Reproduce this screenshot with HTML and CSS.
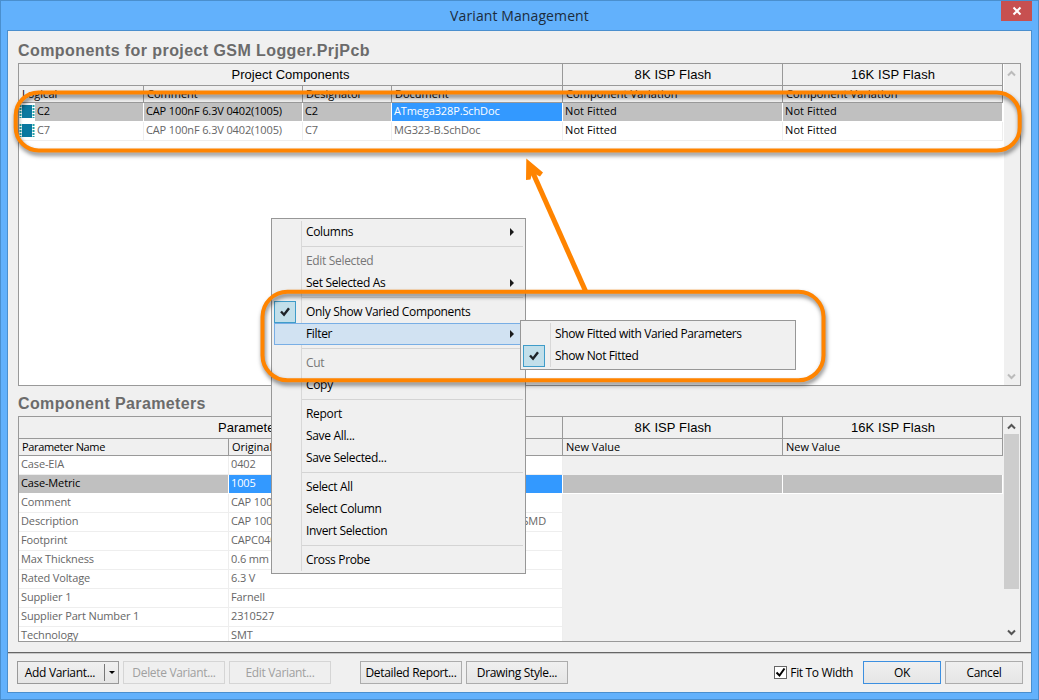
FILE: index.html
```
<!DOCTYPE html>
<html lang="en">
<head>
    <meta charset="UTF-8">
    <title>Variant Management</title>
    <link rel="stylesheet" href="styles.css">
</head>
<body>
    <div class="window">
        <header class="titlebar">
            <span>Variant Management</span>
            <button class="close" type="button" aria-label="Close">
                <svg width="10" height="10" viewBox="0 0 10 10"><path d="M1.5 1.5l7 7M8.5 1.5l-7 7" stroke="#fff" stroke-width="2"/></svg>
            </button>
        </header>
        <main class="content">
            <h2>Components for project GSM Logger.PrjPcb</h2>
            <section class="grid components">
                <div class="sheet">
                    <div class="bands"><span>Project Components</span><span>8K ISP Flash</span><span>16K ISP Flash</span></div>
                    <div class="row head"><span>Logical</span><span>Comment</span><span>Designator</span><span>Document</span><span>Component Variation</span><span>Component Variation</span></div>
                    <div class="row picked">
                        <span class="part"><svg width="16" height="18" viewBox="0 0 16 18"><path d="M1.5 2v13M14.5 2v13" stroke="#23a3a8" stroke-width="2" stroke-dasharray="2 1"/><path d="M3 2h10v13H3z" fill="#0a78a0"/></svg>C2</span>
                        <span>CAP 100nF 6.3V 0402(1005)</span><span>C2</span><span class="active">ATmega328P.SchDoc</span><span>Not Fitted</span><span>Not Fitted</span>
                    </div>
                    <div class="row">
                        <span class="part"><svg width="16" height="18" viewBox="0 0 16 18"><path d="M1.5 2v13M14.5 2v13" stroke="#23a3a8" stroke-width="2" stroke-dasharray="2 1"/><path d="M3 2h10v13H3z" fill="#0a78a0"/></svg>C7</span>
                        <span>CAP 100nF 6.3V 0402(1005)</span><span>C7</span><span>MG323-B.SchDoc</span><span class="dark">Not Fitted</span><span class="dark">Not Fitted</span>
                    </div>
                </div>
                <div class="scroll off">
                    <svg width="9" height="7" viewBox="0 0 9 7"><path d="M1 5.5l3.5-3.5L8 5.5"/></svg>
                    <svg width="9" height="7" viewBox="0 0 9 7"><path d="M1 1.5L4.5 5 8 1.5"/></svg>
                </div>
            </section>
            <h2>Component Parameters</h2>
            <section class="grid params">
                <div class="sheet">
                    <div class="bands"><span>Parameters</span><span>8K ISP Flash</span><span>16K ISP Flash</span></div>
                    <div class="row head"><span>Parameter Name</span><span>Original</span><span>New Value</span><span>New Value</span></div>
                    <div class="row"><span>Case-EIA</span><span>0402</span><span></span><span></span></div>
                    <div class="row picked"><span>Case-Metric</span><span class="active">1005</span><span></span><span></span></div>
                    <div class="row"><span>Comment</span><span>CAP 100nF</span><span></span><span></span></div>
                    <div class="row"><span>Description</span><span class="desc"><i>CAP 100nF</i><i>SMD</i></span><span></span><span></span></div>
                    <div class="row"><span>Footprint</span><span>CAPC0402</span><span></span><span></span></div>
                    <div class="row"><span>Max Thickness</span><span>0.6 mm</span><span></span><span></span></div>
                    <div class="row"><span>Rated Voltage</span><span>6.3 V</span><span></span><span></span></div>
                    <div class="row"><span>Supplier 1</span><span>Farnell</span><span></span><span></span></div>
                    <div class="row"><span>Supplier Part Number 1</span><span>2310527</span><span></span><span></span></div>
                    <div class="row"><span>Technology</span><span>SMT</span><span></span><span></span></div>
                </div>
                <div class="scroll">
                    <svg width="9" height="7" viewBox="0 0 9 7"><path d="M1 5.5l3.5-3.5L8 5.5"/></svg>
                    <div class="thumb"></div>
                    <svg width="9" height="7" viewBox="0 0 9 7"><path d="M1 1.5L4.5 5 8 1.5"/></svg>
                </div>
            </section>
            <footer class="actions">
                <button type="button" class="btn split"><span>Add Variant...</span><i></i></button>
                <button type="button" class="btn" disabled>Delete Variant...</button>
                <button type="button" class="btn" disabled>Edit Variant...</button>
                <button type="button" class="btn report">Detailed Report...</button>
                <button type="button" class="btn">Drawing Style...</button>
                <label class="fit"><span class="box"><svg width="11" height="11" viewBox="0 0 11 11"><path d="M1.5 5.5l3 3 5-7" fill="none" stroke="#000" stroke-width="2"/></svg></span>Fit To Width</label>
                <button type="button" class="btn small ok">OK</button>
                <button type="button" class="btn small">Cancel</button>
            </footer>
        </main>
    </div>

    <ul class="menu context">
        <li class="sub">Columns</li>
        <li class="sep"></li>
        <li class="off">Edit Selected</li>
        <li class="sub">Set Selected As</li>
        <li class="sep"></li>
        <li><span class="tick"><svg width="12" height="12" viewBox="0 0 12 12"><path d="M2 5.5l3 3.2L10 2.2"/></svg></span>Only Show Varied Components</li>
        <li class="sub hot">Filter</li>
        <li class="sep"></li>
        <li class="off">Cut</li>
        <li>Copy</li>
        <li class="sep"></li>
        <li>Report</li>
        <li>Save All...</li>
        <li>Save Selected...</li>
        <li class="sep"></li>
        <li>Select All</li>
        <li>Select Column</li>
        <li>Invert Selection</li>
        <li class="sep"></li>
        <li>Cross Probe</li>
    </ul>
    <ul class="menu filter">
        <li>Show Fitted with Varied Parameters</li>
        <li><span class="tick"><svg width="12" height="12" viewBox="0 0 12 12"><path d="M2 5.5l3 3.2L10 2.2"/></svg></span>Show Not Fitted</li>
    </ul>

    <!-- callouts -->
    <svg class="marks" width="1039" height="700" viewBox="0 0 1039 700">
        <g class="rings">
            <rect x="15.7" y="92.5" width="1004" height="58" rx="23"/>
            <rect x="262.5" y="291.8" width="561" height="88.5" rx="25"/>
        </g>
        <path d="M585.5 291L533 173" stroke="#ff8400" stroke-width="5"/>
        <path d="M526.3 158.5L543 172.5 540 176.5 535 174 531.5 175.5 530.5 179.5 526 180z" fill="#ff8400"/>
    </svg>
</body>
</html>
```
FILE: styles.css
```
* {
    box-sizing: border-box;
}

body {
    margin: 0;
    font-family: "Open Sans", "Noto Sans", sans-serif;
    font-size: 11px;
    color: #000;
}

button {
    font: inherit;
    letter-spacing: inherit;
    padding: 0;
}

.window {
    display: flex;
    flex-direction: column;
    width: 1039px;
    height: 700px;
    padding: 0 6px 6px;
    background-color: #62b1fc;
    border: 1px solid #4a8fce;
}

.titlebar {
    display: flex;
    justify-content: center;
    height: 29px;
    line-height: 30px;
    font-size: 14px;
    letter-spacing: 0.1px;
    color: #1c2c3c;
    position: relative;
}

.close {
    position: absolute;
    top: 0;
    right: 0;
    width: 31px;
    height: 20px;
    border: none;
    background-color: #c75050;
    display: flex;
    align-items: center;
    justify-content: center;
}

.content {
    flex: 1;
    display: flex;
    flex-direction: column;
    background-color: #f0f0f0;
    border: 1px solid #4a8fce;
}

h2 {
    margin: 0;
    padding-left: 10px;
    font-family: "Liberation Sans", Arial, sans-serif;
    font-size: 16px;
    letter-spacing: 0.42px;
    color: #6b6b6b;
    height: 32px;
    line-height: 39px;
}

.grid {
    display: flex;
    justify-content: space-between;
    width: 1003px;
    margin-left: 10px;
    border: 1px solid #999;
    overflow: hidden;
}

.components {
    height: 323px;
    background-color: #fff;
}

.components + h2 {
    height: 30px;
    line-height: 35px;
    letter-spacing: 0.37px;
}

.params {
    height: 226px;
}

.sheet {
    width: 984px;
}

.bands {
    display: grid;
    grid-template-columns: 544px 220px 220px;
    height: 21px;
    font-family: "Liberation Sans", Arial, sans-serif;
    font-size: 13px;
    line-height: 21px;
    text-align: center;
    background-color: #f0f0f0;
}

.bands span {
    border-right: 1px solid #999;
    border-bottom: 1px solid #999;
}

.bands span + span {
    padding-left: 1px;
    letter-spacing: 0.1px;
}

.params .bands span:first-child {
    padding-left: 199px;
    text-align: left;
}

.row {
    display: grid;
    height: 19px;
    line-height: 16px;
    letter-spacing: -0.13px;
    color: #666;
    white-space: nowrap;
}

.components .row {
    grid-template-columns: 125px 159px 89px 171px 220px 220px;
}

.params .row {
    grid-template-columns: 210px 334px 220px 220px;
}

.row span {
    padding-left: 2px;
    border-right: 1px solid #eee;
    border-bottom: 1px solid #eee;
    overflow: hidden;
}

.row span:nth-child(n+5) {
    letter-spacing: 0.1px;
}

.row.head {
    height: 18px;
    line-height: 18px;
    letter-spacing: 0;
    color: #000;
    background-color: #f0f0f0;
    border-bottom: 1px solid #999;
}

.row.head span {
    padding-left: 3px;
    border-right: 1px solid #999;
    border-bottom: none;
}

.params .row.head span:first-child {
    letter-spacing: -0.35px;
}

.row.picked {
    color: #000;
}

.row.picked span {
    background-color: #c0c0c0;
    border-color: #fff;
}

.row.picked .active {
    color: #fff;
    background-color: #3399ff;
}

.row .dark {
    color: #000;
}

.row .part {
    display: flex;
    padding-left: 0;
}

.part svg {
    margin-right: 2px;
    flex: none;
    background-color: #fff;
}

.params .row:not(.head) span:nth-child(-n+2) {
    background-color: #fff;
}

.params .row.picked span:nth-child(1) {
    background-color: #c0c0c0;
}

.params .row.picked span.active {
    background-color: #3399ff;
}

.params .row:not(.picked):not(.head) span:nth-child(n+3) {
    border-color: #f0f0f0;
}

.desc {
    display: flex;
    justify-content: space-between;
    padding-right: 16px;
}

.row i {
    font-style: normal;
}

.scroll {
    display: flex;
    flex-direction: column;
    align-items: center;
    justify-content: space-between;
    width: 16px;
    padding: 6px 1px 5px 0;
    background-color: #f0f0f0;
}

.scroll path {
    fill: none;
    stroke: #555;
    stroke-width: 2;
}

.scroll.off path {
    stroke: #bbb;
}

.thumb {
    width: 15px;
    height: 155px;
    margin: 4px 0 auto;
    background-color: #cdcdcd;
}

.actions {
    display: flex;
    align-items: center;
    gap: 4px;
    height: 40px;
    margin-top: 10px;
    padding: 0 8px 0 9px;
    border-top: 1px solid #666;
    box-shadow: inset 0 1px #c8c8c8;
    font-size: 12px;
    letter-spacing: -0.33px;
}

.btn {
    width: 102px;
    height: 23px;
    border: 1px solid #acacac;
    background: linear-gradient(#f0f0f0, #e5e5e5);
    line-height: 21px;
}

.btn:disabled {
    color: #a0a0a0;
    border-color: #d5d5d5;
    background: #efefef;
}

.split {
    display: flex;
    align-items: center;
    border-color: #999;
}

.split span {
    width: 87px;
    height: 17px;
    padding-right: 2px;
    line-height: 17px;
    border-right: 1px solid #777;
}

.split i {
    margin-left: 4px;
    border: 3px solid transparent;
    border-top-color: #000;
    border-bottom: none;
}

.report {
    margin-left: 25px;
}

.fit {
    display: flex;
    align-items: center;
    gap: 3px;
    margin: 0 6px 0 auto;
}

.box {
    width: 13px;
    height: 13px;
    border: 1px solid #666;
    background-color: #fff;
    display: flex;
}

.small {
    width: 78px;
}

.ok {
    border-color: #3c8fe0;
}

.menu {
    position: absolute;
    margin: 0;
    padding: 2px;
    list-style: none;
    font-size: 12px;
    line-height: 22px;
    letter-spacing: -0.33px;
    border: 1px solid #979797;
    background: linear-gradient(#d8d8d8, #d8d8d8) 29px 2px / 1px calc(100% - 4px) no-repeat #f0f0f0;
}

.context {
    left: 271px;
    top: 218px;
    width: 255px;
}

.filter {
    left: 520px;
    top: 320px;
    width: 276px;
    letter-spacing: -0.38px;
}

.menu li {
    position: relative;
    height: 22px;
    padding-left: 32px;
}

.menu li.sep {
    height: 1px;
    margin: 3px 0 3px 28px;
    background-color: #d4d4d4;
}

.menu li.off {
    color: #777;
}

.menu li.hot {
    background-color: #d1e2f2;
    box-shadow: inset 0 0 0 1px #78aee5;
}

.menu li.sub::after {
    content: "";
    position: absolute;
    right: 9px;
    top: 7px;
    border: 4px solid transparent;
    border-left-color: #1a1a1a;
    border-right: none;
}

.tick {
    position: absolute;
    left: 0;
    top: 0;
    width: 22px;
    height: 22px;
    border: 1px solid #3f9cc9;
    background-color: #c2dfea;
    display: flex;
    align-items: center;
    justify-content: center;
}

.tick path {
    fill: none;
    stroke: #1e2328;
    stroke-width: 2.4;
}

.marks {
    position: absolute;
    left: 0;
    top: 0;
    pointer-events: none;
}

.rings {
    fill: none;
    stroke: #ff8400;
    stroke-width: 4;
    filter: drop-shadow(1px 3px 2px rgba(0, 0, 0, 0.5));
}
```
